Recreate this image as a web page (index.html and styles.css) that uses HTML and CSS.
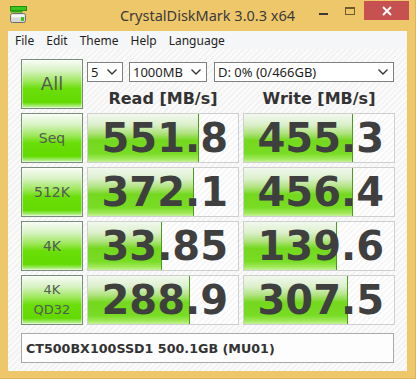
FILE: index.html
```html
<!DOCTYPE html>
<html>
<head>
<meta charset="utf-8">
<link rel="stylesheet" href="styles.css">
</head>
<body>
<div class="window">
  <div class="titlebar">
    <div class="tb-left">
      <svg class="app-icon" width="17" height="18" viewBox="0 0 17 18">
        <rect x="0.5" y="0.5" width="16" height="4" fill="#3cc31e" stroke="#1f8f10" stroke-width="1"/>
        <rect x="0.5" y="4.5" width="12" height="2" fill="#2aa814"/>
        <rect x="0.5" y="7.5" width="15" height="9" rx="2" fill="#d7d7d7" stroke="#6d6d6d" stroke-width="1"/>
        <rect x="1.5" y="8.5" width="13" height="3" fill="#f4f4f4"/>
        <rect x="11" y="11" width="3" height="4" fill="#3cc31e"/>
      </svg>
    </div>
    <div class="title">CrystalDiskMark 3.0.3 x64</div>
    <div class="tb-right">
      <div class="ctl ctl-min"><span class="dash"></span></div>
      <div class="ctl ctl-max"><span class="box"></span></div>
      <div class="ctl ctl-close">
        <svg width="10" height="10" viewBox="0 0 10 10"><path d="M1 1 L9 9 M9 1 L1 9" stroke="#ffffff" stroke-width="2"/></svg>
      </div>
    </div>
  </div>
  <div class="client">
    <div class="menubar">
      <span class="mi">File</span>
      <span class="mi">Edit</span>
      <span class="mi">Theme</span>
      <span class="mi">Help</span>
      <span class="mi">Language</span>
    </div>
    <div class="content">
      <div class="grid">
        <div class="btn btn-all">All</div>
        <div class="top">
          <div class="selects">
            <div class="sel sel-count"><span>5</span><svg class="chev" width="10" height="6" viewBox="0 0 10 6"><path d="M0.5 0.5 L5 5 L9.5 0.5" fill="none" stroke="#333" stroke-width="1.4"/></svg></div>
            <div class="sel sel-size"><span>1000MB</span><svg class="chev" width="10" height="6" viewBox="0 0 10 6"><path d="M0.5 0.5 L5 5 L9.5 0.5" fill="none" stroke="#333" stroke-width="1.4"/></svg></div>
            <div class="sel sel-drive"><span>D: 0% (0/466GB)</span><svg class="chev" width="10" height="6" viewBox="0 0 10 6"><path d="M0.5 0.5 L5 5 L9.5 0.5" fill="none" stroke="#333" stroke-width="1.4"/></svg></div>
          </div>
          <div class="heads">
            <div class="head">Read [MB/s]</div>
            <div class="head">Write [MB/s]</div>
          </div>
        </div>

        <div class="btn">Seq</div>
        <div class="cell"><div class="bar" style="width:111px"></div><span class="num">551.8</span></div>
        <div class="cell"><div class="bar" style="width:109px"></div><span class="num">455.3</span></div>

        <div class="btn">512K</div>
        <div class="cell"><div class="bar" style="width:106px"></div><span class="num">372.1</span></div>
        <div class="cell"><div class="bar" style="width:109px"></div><span class="num">456.4</span></div>

        <div class="btn">4K</div>
        <div class="cell"><div class="bar" style="width:74px"></div><span class="num">33.85</span></div>
        <div class="cell"><div class="bar" style="width:93px"></div><span class="num">139.6</span></div>

        <div class="btn btn-two">4K<br>QD32</div>
        <div class="cell"><div class="bar" style="width:102px"></div><span class="num">288.9</span></div>
        <div class="cell"><div class="bar" style="width:104px"></div><span class="num">307.5</span></div>
      </div>
      <div class="model">CT500BX100SSD1 500.1GB (MU01)</div>
    </div>
  </div>
</div>
</body>
</html>
```
FILE: styles.css
```css
* { box-sizing: border-box; }
html, body { margin: 0; padding: 0; }
body { background: #efc76b; }

.window {
  width: 416px;
  height: 379px;
  background: #efc76b;
  border-right: 1px solid #dcb45e;
  border-bottom: 1px solid #dcb45e;
  display: flex;
  flex-direction: column;
}

.titlebar {
  height: 31px;
  display: grid;
  grid-template-columns: 1fr auto 1fr;
  align-items: start;
}
.tb-left { padding: 6px 0 0 10px; }
.app-icon { display: block; }
.title {
  font-family: "Noto Sans", "Open Sans", sans-serif;
  font-size: 14.5px;
  line-height: 20px;
  padding-top: 5px;
  color: #3a3a3a;
}
.tb-right {
  display: flex;
  justify-content: flex-end;
  align-items: flex-start;
  padding-right: 6px;
}
.ctl { height: 20px; display: flex; align-items: center; justify-content: center; }
.ctl-min { width: 26px; }
.ctl-min .dash { width: 9px; height: 2px; background: #3a3a3a; margin-top: 7px; }
.ctl-max { width: 28px; align-items: flex-start; }
.ctl-max .box { width: 10px; height: 8px; border: 1px solid #6f5a2c; border-top-width: 2px; margin-top: 7px; }
.ctl-close { width: 45px; height: 19px; margin-top: 1px; background: #c75050; }
.ctl-close svg { display: block; }

.client {
  margin: 0 8px;
  height: 340px;
  display: flex;
  flex-direction: column;
}

.menubar {
  height: 18px;
  background: #f5f6f7;
  display: flex;
  align-items: center;
  gap: 12px;
  padding-left: 7px;
  font-family: "Noto Sans", "Open Sans", sans-serif;
  font-size: 12px;
  color: #1e1e1e;
}

.content {
  flex: 1;
  padding: 10px 13px 8px;
  background-color: #f6f6f6;
  background-image: repeating-linear-gradient(135deg, #fbfbfb 0px, #fbfbfb 2px, #f3f3f3 2px, #f3f3f3 4px);
  display: flex;
  flex-direction: column;
}

.grid {
  display: grid;
  grid-template-columns: 62px 152px 152px;
  grid-auto-rows: 50px;
  column-gap: 4px;
  row-gap: 4px;
}

.btn {
  border: 1px solid #7b8b7b;
  background: linear-gradient(to bottom, #f8fcf6 0%, #d8f2c4 22%, #9de85a 45%, #6ade08 60%, #62da00 88%, #9eea66 95%, #cdf5ad 100%);
  box-shadow: inset 0 0 0 1px rgba(255,255,255,0.45);
  display: flex;
  align-items: center;
  justify-content: center;
  text-align: center;
  font-family: "DejaVu Sans", Verdana, sans-serif;
  font-size: 14px;
  line-height: 20px;
  color: #535b53;
}
.btn-all { font-size: 18px; }
.btn-two { font-size: 13px; line-height: 20px; }

.top { grid-column: 2 / span 2; padding-top: 3px; }
.selects { display: flex; gap: 6px; height: 20px; }
.sel {
  height: 20px;
  border: 1px solid #7f7f7f;
  background: #ffffff;
  display: flex;
  align-items: center;
  justify-content: space-between;
  padding: 0 5px 0 3px;
  font-family: "Noto Sans", "Open Sans", sans-serif;
  font-size: 13px;
  color: #1e1e1e;
}
.sel-count { width: 36px; }
.sel-size { width: 78px; margin-right: 1px; }
.sel-drive { width: 180px; }
.chev { display: block; }

.heads {
  display: grid;
  grid-template-columns: 152px 152px;
  column-gap: 4px;
  margin-top: 7px;
}
.head {
  text-align: center;
  font-family: "DejaVu Sans", Verdana, sans-serif;
  font-weight: bold;
  font-size: 16px;
  line-height: 20px;
  color: #333333;
}

.cell {
  position: relative;
  border: 1px solid #cfcfcf;
  background-color: #fdfdfd;
  background-image: repeating-linear-gradient(135deg, #ffffff 0px, #ffffff 2px, #f7f7f7 2px, #f7f7f7 4px);
  display: flex;
  align-items: center;
  justify-content: flex-end;
  padding-right: 10px;
}
.bar {
  position: absolute;
  left: 0;
  top: 0;
  bottom: 0;
  border-right: 1px solid #4e9a1c;
  background: linear-gradient(to bottom, #f2f8ee 0%, #dcf0cc 22%, #b0e37e 40%, #74d81e 55%, #78dc24 82%, #a2e95c 94%, #c6f299 100%);
}
.num {
  position: relative;
  font-family: "DejaVu Sans", Verdana, sans-serif;
  font-weight: bold;
  font-size: 40px;
  line-height: 48px;
  color: #3f3f3f;
}

.model {
  margin-top: 8px;
  height: 30px;
  border: 1px solid #a9a9a9;
  background: #fdfdfd;
  display: flex;
  align-items: center;
  padding-left: 4px;
  font-family: "DejaVu Sans", Verdana, sans-serif;
  font-weight: bold;
  font-size: 12.7px;
  color: #333333;
}
```
